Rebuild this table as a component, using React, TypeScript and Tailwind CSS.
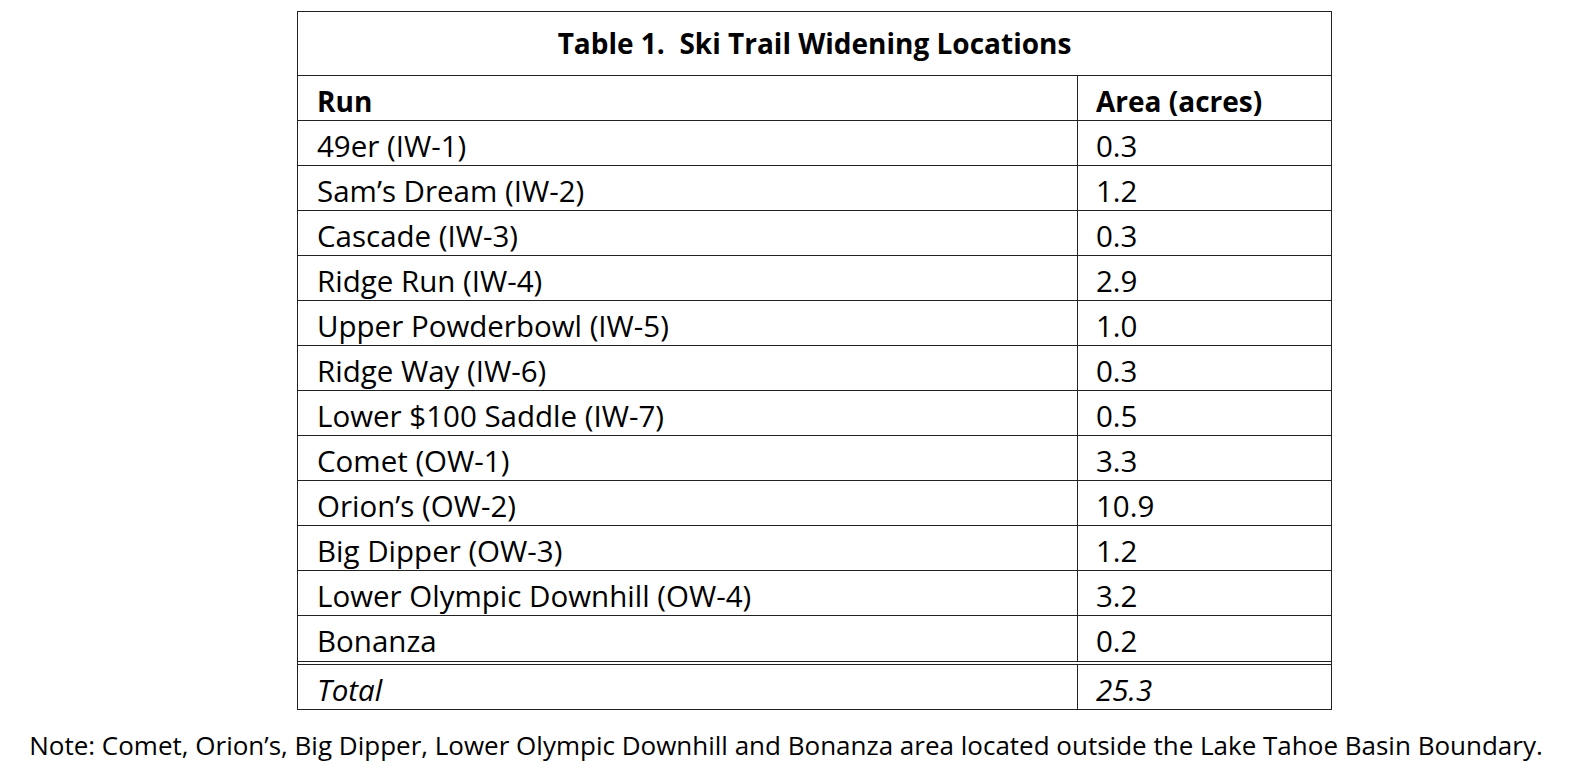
import React from 'react';

const rows: [string, string][] = [
  ['49er (IW-1)', '0.3'],
  ['Sam’s Dream (IW-2)', '1.2'],
  ['Cascade (IW-3)', '0.3'],
  ['Ridge Run (IW-4)', '2.9'],
  ['Upper Powderbowl (IW-5)', '1.0'],
  ['Ridge Way (IW-6)', '0.3'],
  ['Lower $100 Saddle (IW-7)', '0.5'],
  ['Comet (OW-1)', '3.3'],
  ['Orion’s (OW-2)', '10.9'],
  ['Big Dipper (OW-3)', '1.2'],
  ['Lower Olympic Downhill (OW-4)', '3.2'],
  ['Bonanza', '0.2'],
];

export default function App() {
  return (
    <div
      className="min-h-screen bg-white text-black pt-[11px]"
      style={{ fontFamily: '"Open Sans", "Noto Sans", sans-serif' }}
    >
      <div className="ml-[297px] w-[1035px] border border-[#222]">
        <div className="h-[64px] flex items-center justify-center border-b border-[#222] text-[28px] leading-[1.2] font-bold whitespace-pre">
          Table 1.  Ski Trail Widening Locations
        </div>

        <div className="grid grid-cols-[780px_1fr] h-[45px] border-b border-[#222] text-[28px] leading-[1.2] font-bold">
          <div className="flex items-center pl-[19px] pt-[7px] border-r border-[#222]">Run</div>
          <div className="flex items-center pl-[18px] pt-[7px]">Area (acres)</div>
        </div>

        {rows.map(([run, area], i) => {
          const last = i === rows.length - 1;
          return (
            <div
              key={run}
              className={
                last
                  ? 'grid grid-cols-[780px_1fr] h-[49px] border-b-4 border-double border-[#222] text-[29.5px] leading-[1.2]'
                  : 'grid grid-cols-[780px_1fr] h-[45px] border-b border-[#222] text-[29.5px] leading-[1.2]'
              }
            >
              <div className="flex items-center pl-[19px] pt-[5px] border-r border-[#222]">{run}</div>
              <div className="flex items-center pl-[18px] pt-[5px]">{area}</div>
            </div>
          );
        })}

        <div className="grid grid-cols-[780px_1fr] h-[44px] text-[29.5px] leading-[1.2] italic">
          <div className="flex items-center pl-[19px] pt-[5px] border-r border-[#222]">Total</div>
          <div className="flex items-center pl-[18px] pt-[5px]">25.3</div>
        </div>
      </div>

      <p className="mt-[16px] text-center text-[26px]">
        Note: Comet, Orion’s, Big Dipper, Lower Olympic Downhill and Bonanza area located outside the Lake Tahoe Basin Boundary.
      </p>
    </div>
  );
}
